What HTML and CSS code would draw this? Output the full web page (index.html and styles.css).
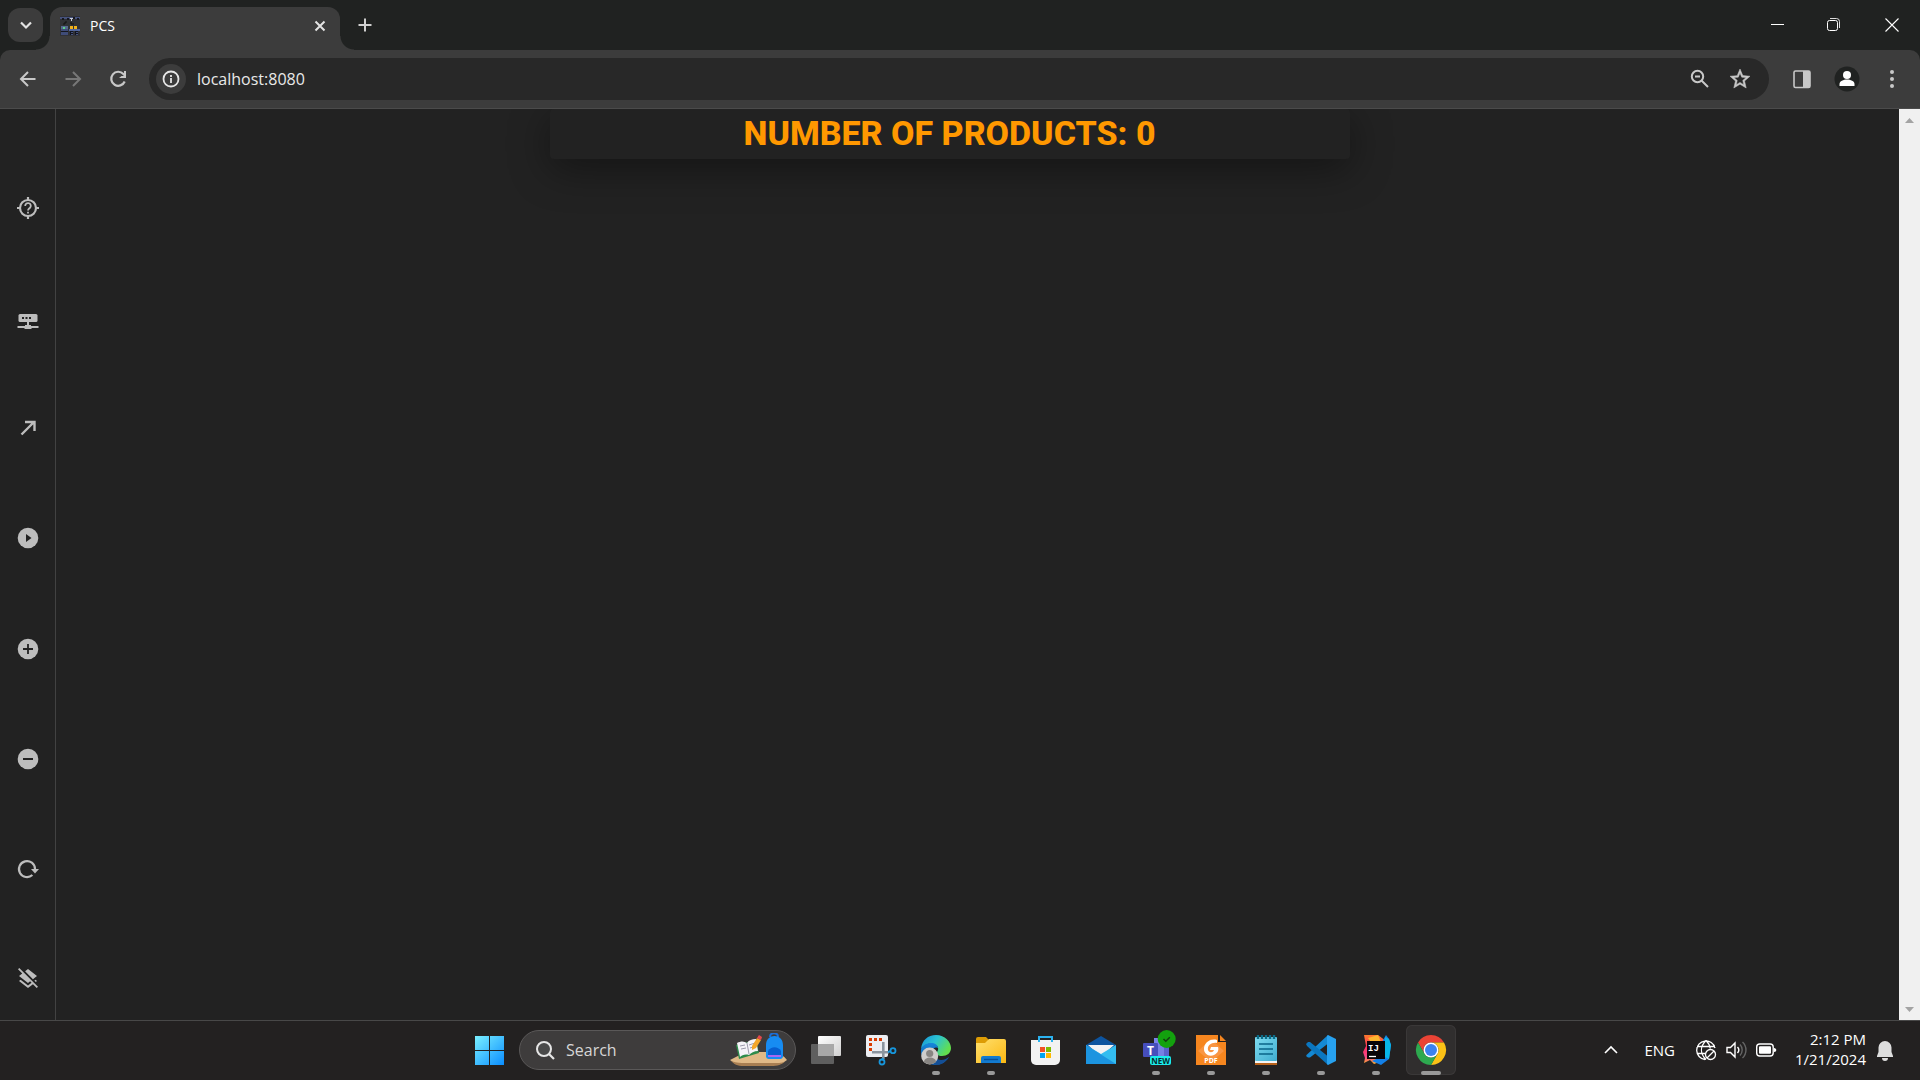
FILE: index.html
```html
<!DOCTYPE html>
<html lang="en">
<head>
<meta charset="utf-8">
<meta name="viewport" content="width=device-width, initial-scale=1">
<title>PCS</title>
<link rel="stylesheet" href="styles.css">
</head>
<body>
<header class="browser">
  <div class="tab-strip">
    <button class="tab-search" aria-label="Search tabs"><svg width="20" height="20" viewBox="0 0 20 20"><path d="M5 7.500l5 5 5-5" fill="none" stroke="#e3e3e3" stroke-width="2.200"/></svg></button>
    <div class="tab">
      <svg class="favicon" width="20" height="20" viewBox="0 0 20 20">
        <rect width="20" height="20" fill="#303136"/>
        <path d="M0 1h20v2H0z" fill="#46527c"/><path d="M2 2h2v2H2zM7 2h2v2H7zM13 1h2v2h-2zM17 2h2v2h-2z" fill="#16181f"/>
        <path d="M10 2h3v1h-1v2h-1V3h-1z" fill="#c8ccd8"/><path d="M4 9V7h2V5M11 6v2h3" stroke="#111" fill="none"/>
        <path d="M1 11h7v8H1z" fill="#3f4c78"/><path d="M1 10h7v3H1z" fill="#55688f"/><path d="M3 11h2v2H3z" fill="#5ed08a"/><path d="M1 15h7v1H1z" fill="#15171d"/>
        <path d="M10 10h3v3h-3zM14 10h3v3h-3z" fill="#f2b11b"/><path d="M9 13h11v2H9z" fill="#52669d"/><path d="M10 15h3v4h-3zM15 15h3v4h-3z" fill="#111420"/><path d="M11 16h2v1h-2zM16 16h2v1h-2zM11 18h2v1h-2zM16 18h2v1h-2z" fill="#46527c"/>
      </svg>
      <span class="tab-title">PCS</span>
      <button class="tab-close" aria-label="Close tab"><svg width="20" height="20" viewBox="0 0 20 20"><path d="M5.500 5.500l9 9M14.500 5.500l-9 9" stroke="#e3e3e3" stroke-width="2"/></svg></button>
    </div>
    <button class="new-tab" aria-label="New tab"><svg width="20" height="20" viewBox="0 0 20 20"><path d="M10 3.500v13M3.500 10h13" stroke="#d0d0d0" stroke-width="2"/></svg></button>
    <div class="window-controls">
      <button aria-label="Minimize"><svg width="20" height="20" viewBox="0 0 20 20"><path d="M3 9.500h13" stroke="#fff"/></svg></button>
      <button aria-label="Restore"><svg width="20" height="20" viewBox="0 0 20 20"><rect x="2.500" y="5.500" width="10" height="10" rx="2" fill="none" stroke="#fff"/><path d="M5 3.500h6.500a3 3 0 0 1 3 3V13" fill="none" stroke="#ddd"/></svg></button>
      <button aria-label="Close"><svg width="20" height="20" viewBox="0 0 20 20"><path d="M3.500 3.500l13 13M16.500 3.500l-13 13" stroke="#fff" stroke-width="1.100"/></svg></button>
    </div>
  </div>
  <nav class="toolbar" aria-label="Browser">
    <div class="nav-buttons">
      <button aria-label="Back"><svg width="24" height="24" viewBox="0 0 24 24"><path d="M19.500 12H5.500M12 5l-7 7 7 7" fill="none" stroke="#c8c8c8" stroke-width="2"/></svg></button>
      <button aria-label="Forward"><svg width="24" height="24" viewBox="0 0 24 24"><path d="M4.500 12h14M12 5l7 7-7 7" fill="none" stroke="#777" stroke-width="2"/></svg></button>
      <button aria-label="Reload"><svg width="24" height="24" viewBox="0 0 24 24"><path d="M18.700 14.500a7 7 0 1 1-1.300-7.500l2 2" fill="none" stroke="#c8c8c8" stroke-width="2.200"/><path d="M20 4v7h-7l2.500-2H18V4z" fill="#c8c8c8"/></svg></button>
    </div>
    <div class="omnibox">
      <button class="site-info" aria-label="View site information"><svg width="20" height="20" viewBox="0 0 20 20"><circle cx="10" cy="10" r="7.500" fill="none" stroke="#e6e6e6" stroke-width="1.800"/><path d="M10 9v5M10 6v2" stroke="#e6e6e6" stroke-width="1.800"/></svg></button>
      <input class="url" type="text" value="localhost:8080" aria-label="Address and search bar">
      <button aria-label="Zoom"><svg width="24" height="24" viewBox="0 0 24 24"><circle cx="9.500" cy="9.500" r="5.700" fill="none" stroke="#c8c8c8" stroke-width="2"/><path d="M7 9.500h5M13.500 13.500l6.500 6.500" stroke="#c8c8c8" stroke-width="2"/></svg></button>
      <button aria-label="Bookmark this tab"><svg width="24" height="24" viewBox="0 0 24 24"><path fill="#c8c8c8" stroke="#c8c8c8" stroke-width=".5" d="M22 9.240l-7.190-.62L12 2 9.190 8.630 2 9.240l5.460 4.730L5.820 21 12 17.270 18.180 21l-1.630-7.030L22 9.240zM12 15.400l-3.760 2.270 1-4.280-3.320-2.880 4.380-.38L12 6.100l1.710 4.040 4.380.38-3.320 2.880 1 4.280L12 15.400z"/></svg></button>
    </div>
    <div class="actions">
      <button aria-label="Side panel"><svg width="20" height="20" viewBox="0 0 20 20"><rect x="2" y="2" width="16" height="16.500" rx="1.500" fill="none" stroke="#c8c8c8" stroke-width="1.600"/><path d="M11 2h7v16.500h-7z" fill="#c8c8c8"/></svg></button>
      <button aria-label="Profile"><svg width="26" height="26" viewBox="0 0 26 26"><circle cx="13" cy="13" r="12.500" fill="#202221"/><circle cx="13" cy="9" r="4" fill="#fff"/><path d="M5.500 20v-2c0-3 4-4.500 7.500-4.500s7.500 1.500 7.500 4.500v2z" fill="#fff"/></svg></button>
      <button aria-label="Menu"><svg width="20" height="20" viewBox="0 0 20 20" fill="#c8c8c8"><circle cx="10" cy="3" r="2"/><circle cx="10" cy="10" r="2"/><circle cx="10" cy="17" r="2"/></svg></button>
    </div>
  </nav>
</header>

<div class="viewport">
  <aside class="side-nav">
    <button aria-label="Status"><svg width="24" height="24" viewBox="0 0 24 24"><circle cx="12" cy="12" r="8" fill="none" stroke="#bdbdbd" stroke-width="2.200"/><path d="M12 1v3M12 20v3M1 12h3M20 12h3" stroke="#bdbdbd" stroke-width="2.200"/><path d="M9.200 10a2.800 2.800 0 1 1 4.600 2c-1.100.9-1.800 1.300-1.800 2.600M12 15.700v1.800" fill="none" stroke="#bdbdbd" stroke-width="1.800"/></svg></button>
    <button aria-label="Network"><svg width="24" height="24" viewBox="0 0 24 24"><rect x="2.500" y="8" width="19" height="8" rx="1.500" fill="#bdbdbd"/><path d="M11 16h2v3h2v1h7.500v2H16l-1 1H9l-1-1H1.500v-2H9v-1h2z" fill="#bdbdbd"/><path d="M6 11h2v2H6zM9.500 11h2v2h-2zM13 11h2v2h-2z" fill="#222"/></svg></button>
    <button aria-label="Connect"><svg width="24" height="24" viewBox="0 0 24 24"><path d="M5.500 18.500L18 6M9 6h9.500v9" fill="none" stroke="#bdbdbd" stroke-width="2.400"/></svg></button>
    <button aria-label="Play"><svg width="24" height="24" viewBox="0 0 24 24"><circle cx="12" cy="12" r="10.300" fill="#bdbdbd"/><path d="M10 8v8l5.500-4z" fill="#222"/></svg></button>
    <button aria-label="Add"><svg width="24" height="24" viewBox="0 0 24 24"><circle cx="12" cy="12" r="10.300" fill="#bdbdbd"/><path d="M12 7v10M7 12h10" stroke="#222" stroke-width="1.800"/></svg></button>
    <button aria-label="Remove"><svg width="24" height="24" viewBox="0 0 24 24"><circle cx="12" cy="12" r="10.300" fill="#bdbdbd"/><path d="M7 12h10" stroke="#222" stroke-width="2"/></svg></button>
    <button aria-label="Refresh"><svg width="24" height="24" viewBox="0 0 24 24"><path d="M19 12a8 8 0 1 0-2.600 6" fill="none" stroke="#bdbdbd" stroke-width="2.200"/><path d="M15 12h8l-4 4.500z" fill="#bdbdbd"/></svg></button>
    <button aria-label="Clear layers"><svg width="24" height="24" viewBox="0 0 24 24"><path d="M19.810 14.990l1.190-.92-1.430-1.430-1.190.92 1.430 1.430zm-.45-4.720L21 9l-9-7-2.910 2.270 7.870 7.880 2.400-1.880zM3.270 1L2 2.270l4.220 4.220L3 9l1.630 1.270L12 16l2.100-1.630 1.430 1.430L12 18.540l-7.370-5.730L3 14.070l9 7 4.950-3.850L20.730 21 22 19.730 3.270 1z" fill="#bdbdbd"/></svg></button>
  </aside>
  <main class="stage">
    <section class="counter"><h1>NUMBER OF PRODUCTS: 0</h1></section>
  </main>
  <div class="scrollbar">
    <svg width="9" height="5" viewBox="0 0 9 5"><path d="M0 5l4.500-5L9 5z" fill="#a3a3a3"/></svg>
    <svg width="9" height="5" viewBox="0 0 9 5"><path d="M0 0l4.500 5L9 0z" fill="#a3a3a3"/></svg>
  </div>
</div>

<footer class="taskbar">
  <div class="launcher">
    <button class="app" aria-label="Start"><svg width="40" height="40" viewBox="0 0 40 40"><defs><linearGradient id="win" gradientUnits="userSpaceOnUse" x1="6" y1="6" x2="34" y2="35"><stop offset="0" stop-color="#7af0ff"/><stop offset="1" stop-color="#0c8fff"/></linearGradient></defs><path d="M6 6h14v14H6zM21 6h14v14H21zM6 21h14v14H6zM21 21h14v14H21z" fill="url(#win)"/></svg></button>
    <div class="search">
      <svg width="20" height="20" viewBox="0 0 20 20"><circle cx="9" cy="9" r="7" fill="#4a4a4a" stroke="#e6e6e6" stroke-width="2"/><path d="M14 14l5 5" stroke="#e6e6e6" stroke-width="2.200"/></svg>
      <input type="text" placeholder="Search" aria-label="Search">
      <svg width="58" height="34" viewBox="0 0 58 34">
        <path d="M0 27c7-3 12-8 22-8h24c4 2 8 4 11 8-5 4-8 5-16 5H14C6 32 4 30 0 27z" fill="#e0b987"/><path d="M1 28c6 2 10 2 14 2h27c8 0 11 0 14-2-5 4-8 5-15 5H14C7 33 4 31 1 28z" fill="#a87e52"/>
        <path d="M6 12l20-5 3 13-20 6z" fill="#2d8b4b"/><path d="M7 10c4-2 7-2 10 0 2-3 5-4 9-4l2 12c-4 0-7 2-9 4-4-1-7 0-9 2z" fill="#f5f3f8"/><path d="M17 10l2 11M10 13l5-1M11 16l5-1M19 12l6-2M20 15l6-2" stroke="#9c9aab"/>
        <path d="M22 13l5-8 4 2-5 8-4 2z" fill="#f4a62a"/><path d="M27 5l2-3 3 2-1 3z" fill="#e5484d"/>
        <path d="M40 4c0-5 8-5 8 0" fill="none" stroke="#1c6fd8" stroke-width="2"/><path d="M36 12c0-12 17-12 17 0v12a3 3 0 0 1-3 2H39a3 3 0 0 1-3-2z" fill="#178cf2"/><path d="M38 18c3-5 10-5 13 0v6H38z" fill="#075fd0"/><path d="M38 22h13v2H38z" fill="#a767f2"/>
      </svg>
    </div>
    <button class="app" aria-label="Task view"><svg width="40" height="40" viewBox="0 0 40 40"><defs><linearGradient id="tv" x2="1" y2="1"><stop stop-color="#fff"/><stop offset="1" stop-color="#d0d0d0"/></linearGradient></defs><rect x="12" y="6" width="23" height="20" rx="1" fill="url(#tv)"/><rect x="5" y="14" width="23" height="20" rx="1" fill="#6a6a6a" fill-opacity=".85"/><path d="M12 14h16v12H12z" fill="#a8a8a8"/></svg></button>
    <button class="app" aria-label="Snipping Tool"><svg width="40" height="40" viewBox="0 0 40 40"><rect x="5" y="5" width="22" height="22" rx="2" fill="#eceef2"/><path d="M21 9.500H9.500V21" fill="none" stroke="#d83b01" stroke-width="3" stroke-dasharray="3 2"/><path d="M22.300 12v17M11 22.300h17" stroke="#8b949e" stroke-width="2.600"/><path d="M27 22l3-1M22 28l-1 2" stroke="#1796dc" stroke-width="2"/><circle cx="32" cy="20.700" r="2.500" fill="none" stroke="#1796dc" stroke-width="1.800"/><circle cx="21" cy="32" r="2.500" fill="none" stroke="#1796dc" stroke-width="1.800"/></svg></button>
    <button class="app running" aria-label="Edge"><svg width="40" height="40" viewBox="0 0 40 40"><defs><linearGradient id="e1" x2="1" y2=".5"><stop stop-color="#1590d8"/><stop offset=".5" stop-color="#2bc3d2"/><stop offset="1" stop-color="#62df4e"/></linearGradient><linearGradient id="e2" x2="0" y2="1"><stop stop-color="#1687db"/><stop offset="1" stop-color="#0f5aa8"/></linearGradient></defs><path d="M5 19C6 10 12 5 20 5c9 0 15 7 15 13 0 5-4 8-9 8-4 0-6-2-5-4 3-4 0-8-5-8-5-1-9 2-11 5z" fill="url(#e1)"/><path d="M5 19c2-4 6-6 10-6 4 0 7 2 7 5-5-2-7 3-4 8 3 6 10 6 15 1-3 5-8 8-13 8C11 35 4 28 5 19z" fill="url(#e2)"/><path d="M18 26c3 5 10 5 15 1-3 5-8 8-13 8l-3-3z" fill="#144f96"/><circle cx="13.700" cy="26" r="8.500" fill="#cfcdcb"/><circle cx="13.700" cy="23.500" r="3.600" fill="#888582"/><path d="M8 32c0-6 12-6 12 0-4 3-8 3-12 0z" fill="#888582"/></svg></button>
    <button class="app running" aria-label="File Explorer"><svg width="40" height="40" viewBox="0 0 40 40"><defs><linearGradient id="fo" x2="1" y2="1"><stop stop-color="#ffe06f"/><stop offset="1" stop-color="#fbb812"/></linearGradient></defs><path d="M5 9a2 2 0 0 1 2-2h8l3 3v5H5z" fill="#dd9c05"/><path d="M5 13h9l4-4h15a2 2 0 0 1 2 2v22H5z" fill="url(#fo)"/><path d="M10 33v-5a2 2 0 0 1 2-2h16a2 2 0 0 1 2 2v5z" fill="#137bd0"/><path d="M13 29.500h14" stroke="#07509b" stroke-width="1.400"/></svg></button>
    <button class="app" aria-label="Microsoft Store"><svg width="40" height="40" viewBox="0 0 40 40"><path d="M5 10h29v20a5 5 0 0 1-5 5H10a5 5 0 0 1-5-5z" fill="#f2f2f2"/><path d="M13 12V7h13v5" fill="none" stroke="#2bb2ef" stroke-width="2"/><path d="M14 17h5v5h-5z" fill="#f25022"/><path d="M20 17h5v5h-5z" fill="#7fba00"/><path d="M14 23h5v5h-5z" fill="#00a4ef"/><path d="M20 23h5v5h-5z" fill="#ffb900"/></svg></button>
    <button class="app" aria-label="Mail"><svg width="40" height="40" viewBox="0 0 40 40"><path d="M5 15l15-9 15 9v3H5z" fill="#0d549f"/><path d="M7 15h26L20 27z" fill="#f0f0f2"/><path d="M5 15l15 9 15-9v19H5z" fill="#33bdf0"/><path d="M5 15l30 19H5z" fill="#1c94e0"/><path d="M8 15h24l-12 8.500z" fill="#f2f2f4"/></svg></button>
    <button class="app running" aria-label="Teams"><svg width="40" height="40" viewBox="0 0 40 40"><path d="M18 8h8v22h-8z" fill="#7b83eb"/><path d="M23 14h10v15H23z" fill="#5b62cd"/><path d="M18 14h10v14H18z" fill="#7780e4"/><rect x="7" y="13" width="15" height="14" rx="1" fill="#464ebc"/><text class="teams-t" x="14.500" y="24.500">T</text><circle cx="30.700" cy="9" r="9" fill="#13a10e"/><path d="M27.500 9l2.300 2.300 4-4" fill="none" stroke="#123d10" stroke-width="1.500"/><rect x="14" y="26" width="21" height="9" rx="2" fill="#1bebeb"/><text class="teams-new" x="24.500" y="33.500">NEW</text></svg></button>
    <button class="app running" aria-label="PDF Reader"><svg width="40" height="40" viewBox="0 0 40 40"><path d="M5 5h22v7h8v23H5z" fill="#f6861f"/><path d="M20 9l13 12-13 11L7 21z" fill="#f99542"/><path d="M29 5l6 6h-6z" fill="#f6861f"/><path d="M26 10c-7-2-13 3-13 9 0 5 5 8 10 6 4-2 5-5 4-8h-7l-1 3h4c-1 3-5 3-6 0-1-5 4-8 9-7z" fill="#fff"/><text class="pdf-text" x="20" y="33">PDF</text></svg></button>
    <button class="app running" aria-label="Notepad"><svg width="40" height="40" viewBox="0 0 40 40"><defs><linearGradient id="np" x2="1" y2="1"><stop stop-color="#7fdcf0"/><stop offset="1" stop-color="#3fadd0"/></linearGradient></defs><path d="M9 30h22v5H9z" fill="#b8621b"/><path d="M9 29h22v4H9z" fill="#f4f4f4"/><rect x="9" y="7" width="22" height="24" rx="1" fill="url(#np)"/><path d="M13 14h14M13 19h14M13 24h14" stroke="#0a6488" stroke-width="1.600"/><path d="M12 5v4M16 5v4M20 5v4M24 5v4M28 5v4" stroke="#0b6c88" stroke-width="2.400"/></svg></button>
    <button class="app running" aria-label="Visual Studio Code"><svg width="40" height="40" viewBox="0 0 40 40"><path d="M27 5L6 24.500 5 26l2 1.500h2L29 12z" fill="#1489d4"/><path d="M27 35L6 16 5 14l2-2h2l20 16z" fill="#0b76bf"/><path d="M27 5l8 4v22l-8 4-1-1V6z" fill="#27a1ef"/></svg></button>
    <button class="app running" aria-label="IntelliJ IDEA"><svg width="40" height="40" viewBox="0 0 40 40"><defs><linearGradient id="ij" x2="0" y2="1"><stop stop-color="#fc7a2b"/><stop offset=".4" stop-color="#fe315d"/><stop offset=".75" stop-color="#f7458a"/><stop offset="1" stop-color="#fcb02b"/></linearGradient></defs><path d="M8 5h14l8 6-4 20-8 3-4-4-6 3 1-5-2-6 3-6z" fill="url(#ij)"/><path d="M12 8l10-3 3 7-8 3z" fill="#fdb62f"/><path d="M26 12l4-7 3 4 2 6-2 14-8 6-9-4 10-5z" fill="#1380e8"/><path d="M29 7l4 2 2 6-2 14-4-2z" fill="#08b5e8"/><path d="M11 11h18v18H11z" fill="#080508"/><text class="ij-text" x="12" y="20.500">IJ</text><path d="M13 26.500h7" stroke="#fff" stroke-width="1.300"/></svg></button>
    <button class="app running active" aria-label="Chrome"><svg width="40" height="40" viewBox="0 0 40 40"><path d="M7 12.500A15 15 0 0 1 33 12.500H20a7.500 7.500 0 0 0-6.500 11.250z" fill="#ea4335"/><path d="M33 12.500A15 15 0 0 1 20 35l6.500-11.250A7.500 7.500 0 0 0 20 12.500z" fill="#fbc116"/><path d="M20 35A15 15 0 0 1 7 12.500l6.500 11.250A7.500 7.500 0 0 0 26.500 23.750z" fill="#2da94f"/><circle cx="20" cy="20" r="7.500" fill="#fff"/><circle cx="20" cy="20" r="6" fill="#3b82f0"/></svg></button>
  </div>
  <div class="tray">
    <button aria-label="Show hidden icons"><svg width="20" height="20" viewBox="0 0 20 20"><path d="M4 13l6-6 6 6" fill="none" stroke="#fff" stroke-width="1.600"/></svg></button>
    <button class="language">ENG</button>
    <button class="quick" aria-label="Network, volume and battery">
      <svg width="22" height="22" viewBox="0 0 22 22" fill="none" stroke="#fff" stroke-width="1.300"><path d="M20 9A9.300 9.300 0 1 0 10 20.500M2 7.500h18M2 14.500h8M11 1.500c-6 6-6 13 0 19M11 1.500c2.500 2.500 4 5 4.200 8"/><circle cx="15.500" cy="15.500" r="5"/><path d="M12 19l7-7"/></svg>
      <svg width="22" height="22" viewBox="0 0 22 22" fill="none" stroke="#fff" stroke-width="1.400"><path d="M2 8.500h3.500L10 4v14l-4.500-4.500H2zM12.500 8a4.500 4.500 0 0 1 0 6"/><path d="M15 5.500a8 8 0 0 1 0 11M17.500 3a11 11 0 0 1 0 16" stroke="#666"/></svg>
      <svg width="22" height="22" viewBox="0 0 22 22"><rect x="1.700" y="5" width="16.500" height="12" rx="3" fill="none" stroke="#fff" stroke-width="1.400"/><rect x="4" y="7.200" width="12" height="7.600" rx="1" fill="#fff"/><path d="M19 9c3 0 3 4 0 4z" fill="#fff"/></svg>
    </button>
    <button class="clock"><span>2:12 PM</span><span>1/21/2024</span></button>
    <button aria-label="Notifications"><svg width="20" height="22" viewBox="0 0 20 22"><path d="M10 2a6.500 6.500 0 0 0-6.500 6.500V13L2 17v1h16v-1l-1.500-4V8.500A6.500 6.500 0 0 0 10 2zM7 19h6a3 3 0 0 1-6 0z" fill="#dedede"/></svg></button>
  </div>
</footer>
</body>
</html>
```
FILE: styles.css
```css
* {
  box-sizing: border-box;
}

body {
  margin: 0;
  min-height: 100vh;
  display: flex;
  flex-direction: column;
  background: #222;
  color: #fff;
  font-family: "Open Sans", "Noto Sans", sans-serif;
  font-size: 15px;
}

button,
input {
  margin: 0;
  padding: 0;
  border: 0;
  background: none;
  color: inherit;
  font: inherit;
}

button {
  display: flex;
  align-items: center;
  justify-content: center;
}

svg {
  display: block;
  flex: none;
}

/* Browser chrome */
.browser {
  background: #202221;
}

.tab-strip {
  display: flex;
  align-items: center;
  height: 50px;
  padding-left: 8px;
}

.tab-search {
  width: 35px;
  height: 34px;
  border-radius: 12px;
  background: #3c3c3c;
}

.tab {
  position: relative;
  align-self: flex-end;
  display: flex;
  align-items: center;
  width: 290px;
  height: 43px;
  margin-left: 7px;
  padding: 0 10px 6px;
  border-radius: 12px 12px 0 0;
  background: #3c3c3c;
}

.tab::before,
.tab::after {
  content: "";
  position: absolute;
  bottom: 0;
  width: 14px;
  height: 14px;
}

.tab::before {
  right: 100%;
  background: radial-gradient(circle at 0 0, transparent 13px, #3c3c3c 14px);
}

.tab::after {
  left: 100%;
  background: radial-gradient(circle at 100% 0, transparent 13px, #3c3c3c 14px);
}

.tab-title {
  flex: 1;
  margin-left: 10px;
  font-size: 14px;
}

.new-tab {
  margin-left: 15px;
}

.window-controls {
  display: flex;
  margin-left: auto;
}

.window-controls button {
  width: 57px;
  height: 50px;
}

.toolbar {
  display: flex;
  align-items: center;
  gap: 10px;
  height: 59px;
  padding: 0 6px 0 7px;
  border-bottom: 1px solid #4b4b4b;
  border-radius: 10px 10px 0 0;
  background: #3c3c3c;
}

.nav-buttons {
  display: flex;
  gap: 3px;
}

.nav-buttons button {
  width: 42px;
  height: 42px;
}

.omnibox {
  flex: 1;
  display: flex;
  align-items: center;
  height: 42px;
  padding: 0 9px 0 7px;
  border-radius: 21px;
  background: #282828;
}

.omnibox button {
  width: 40px;
  height: 40px;
}

.omnibox .site-info {
  width: 30px;
  height: 30px;
  border-radius: 50%;
  background: #3c3c3c;
}

.url {
  flex: 1;
  margin-left: 11px;
  color: #e8e8e8;
  font-size: 16px;
}

.actions {
  display: flex;
}

.actions button {
  width: 45px;
  height: 42px;
}

/* Page */
.viewport {
  flex: 1;
  display: flex;
}

.side-nav {
  display: flex;
  flex-direction: column;
  align-items: center;
  justify-content: space-between;
  width: 56px;
  padding: 87px 0 29px;
  border-right: 1px solid #424242;
}

.side-nav svg {
  width: 24px;
  height: 24px;
}

/* The right padding balances the side nav, so the counter is centred on the page */
.stage {
  flex: 1;
  overflow: hidden;
  padding: 0 80px 0 24px;
}

.counter {
  width: 800px;
  max-width: 100%;
  margin: 0 auto;
  border-radius: 4px;
  background: #222;
  box-shadow: 0 10px 40px rgba(0, 0, 0, 0.4);
}

.counter h1 {
  margin: 0;
  padding-bottom: 2px;
  color: #ff9800;
  font: 800 34px/48px Roboto, sans-serif;
  text-align: center;
}

.scrollbar {
  display: flex;
  flex-direction: column;
  align-items: center;
  justify-content: space-between;
  width: 21px;
  padding: 9px 0 8px;
  background: #f0f0f0;
}

/* Taskbar */
.taskbar {
  display: grid;
  grid-template-columns: 1fr auto 1fr;
  align-items: center;
  height: 60px;
  padding-bottom: 1px;
  border-top: 1px solid #484848;
  background: #232121;
}

.launcher {
  grid-column: 2;
  display: flex;
  align-items: center;
  gap: 5px;
}

.app {
  position: relative;
  width: 50px;
  height: 50px;
  border-radius: 6px;
}

.running::after {
  content: "";
  position: absolute;
  bottom: 0;
  left: 50%;
  width: 8px;
  height: 4px;
  margin-left: -4px;
  border-radius: 2px;
  background: #999;
}

.active {
  background: #302e2e;
  box-shadow: inset 0 0 0 1px #3a3838;
}

.active::after {
  width: 20px;
  margin-left: -10px;
}

.search {
  display: flex;
  align-items: center;
  width: 277px;
  height: 40px;
  padding: 0 7px 0 15px;
  border: 1px solid #5a5858;
  border-radius: 20px;
  background: #3e3c3c;
}

.search input {
  flex: 1;
  min-width: 0;
  margin-left: 11px;
  font-size: 16px;
}

.search input::placeholder {
  color: #d6d6d6;
  opacity: 1;
}

.teams-t,
.teams-new,
.pdf-text {
  fill: #fff;
  font: 700 12px "Open Sans", sans-serif;
  text-anchor: middle;
}

.teams-new {
  fill: #062b2b;
  font-size: 8px;
}

.pdf-text {
  font-size: 7px;
}

.ij-text {
  fill: #fff;
  font: 700 9px "Liberation Mono", monospace;
}

.tray {
  display: flex;
  align-items: center;
  justify-content: flex-end;
  padding-right: 25px;
}

.language {
  margin: 0 20px 0 23px;
}

.quick {
  gap: 8px;
}

.clock {
  flex-direction: column;
  align-items: flex-end;
  width: 89px;
  margin-right: 9px;
  padding-bottom: 2px;
  line-height: 20px;
}
```
